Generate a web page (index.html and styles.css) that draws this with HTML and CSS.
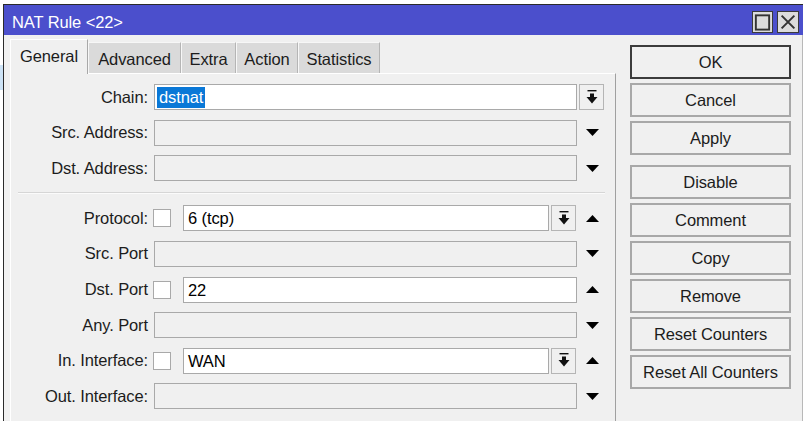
FILE: index.html
```html
<!DOCTYPE html>
<html>
<head>
<meta charset="utf-8">
<link rel="stylesheet" href="styles.css">
</head>
<body>
<div class="desktop">
  <div class="strip"><div class="strip-sel"></div></div>
  <div class="window">
    <div class="titlebar">
      <span class="title">NAT Rule &lt;22&gt;</span>
      <div class="tb-btns">
        <span class="tb-btn tb-max"><svg width="20" height="20" viewBox="0 0 20 20"><rect x="3" y="3" width="14" height="15" fill="none" stroke="#333" stroke-width="2"/></svg></span>
        <span class="tb-btn tb-close"><svg width="22" height="20" viewBox="0 0 22 20"><path d="M4 3 L18 17 M18 3 L4 17" stroke="#333" stroke-width="2.2" fill="none"/></svg></span>
      </div>
    </div>
    <div class="wbody">
      <div class="main">
        <div class="tabs">
          <div class="tab active t-general">General</div>
          <div class="tab t-advanced">Advanced</div>
          <div class="tab t-extra">Extra</div>
          <div class="tab t-action">Action</div>
          <div class="tab t-stats">Statistics</div>
        </div>
        <div class="panel">
          <div class="row">
            <label class="lbl">Chain:</label>
            <div class="field"><div class="input"><span class="sel">dstnat</span></div></div>
            <div class="side"><span class="dd-btn"><svg width="12" height="15" viewBox="0 0 12 15"><rect x="1.5" y="0" width="9" height="1.4" fill="#111"/><rect x="4" y="3.5" width="4" height="4" fill="#111"/><polygon points="0.5,7 11.5,7 6,13.5" fill="#111"/></svg></span></div>
          </div>
          <div class="row">
            <label class="lbl">Src. Address:</label>
            <div class="field"><div class="input off"></div></div>
            <div class="side"><svg class="tri" width="13" height="7" viewBox="0 0 13 7"><polygon points="0,0 13,0 6.5,7" fill="#000"/></svg></div>
          </div>
          <div class="row">
            <label class="lbl">Dst. Address:</label>
            <div class="field"><div class="input off"></div></div>
            <div class="side"><svg class="tri" width="13" height="7" viewBox="0 0 13 7"><polygon points="0,0 13,0 6.5,7" fill="#000"/></svg></div>
          </div>
          <div class="sep"></div>
          <div class="row">
            <label class="lbl">Protocol:</label>
            <div class="field"><span class="chk"></span><div class="input grow">6 (tcp)</div><span class="dd-btn"><svg width="12" height="15" viewBox="0 0 12 15"><rect x="1.5" y="0" width="9" height="1.4" fill="#111"/><rect x="4" y="3.5" width="4" height="4" fill="#111"/><polygon points="0.5,7 11.5,7 6,13.5" fill="#111"/></svg></span></div>
            <div class="side"><svg class="tri" width="13" height="7" viewBox="0 0 13 7"><polygon points="0,7 13,7 6.5,0" fill="#000"/></svg></div>
          </div>
          <div class="row">
            <label class="lbl">Src. Port</label>
            <div class="field"><div class="input off"></div></div>
            <div class="side"><svg class="tri" width="13" height="7" viewBox="0 0 13 7"><polygon points="0,0 13,0 6.5,7" fill="#000"/></svg></div>
          </div>
          <div class="row">
            <label class="lbl">Dst. Port</label>
            <div class="field"><span class="chk"></span><div class="input grow">22</div></div>
            <div class="side"><svg class="tri" width="13" height="7" viewBox="0 0 13 7"><polygon points="0,7 13,7 6.5,0" fill="#000"/></svg></div>
          </div>
          <div class="row">
            <label class="lbl">Any. Port</label>
            <div class="field"><div class="input off"></div></div>
            <div class="side"><svg class="tri" width="13" height="7" viewBox="0 0 13 7"><polygon points="0,0 13,0 6.5,7" fill="#000"/></svg></div>
          </div>
          <div class="row">
            <label class="lbl">In. Interface:</label>
            <div class="field"><span class="chk"></span><div class="input grow">WAN</div><span class="dd-btn"><svg width="12" height="15" viewBox="0 0 12 15"><rect x="1.5" y="0" width="9" height="1.4" fill="#111"/><rect x="4" y="3.5" width="4" height="4" fill="#111"/><polygon points="0.5,7 11.5,7 6,13.5" fill="#111"/></svg></span></div>
            <div class="side"><svg class="tri" width="13" height="7" viewBox="0 0 13 7"><polygon points="0,7 13,7 6.5,0" fill="#000"/></svg></div>
          </div>
          <div class="row">
            <label class="lbl">Out. Interface:</label>
            <div class="field"><div class="input off"></div></div>
            <div class="side"><svg class="tri" width="13" height="7" viewBox="0 0 13 7"><polygon points="0,0 13,0 6.5,7" fill="#000"/></svg></div>
          </div>
        </div>
      </div>
      <div class="buttons">
        <div class="btn default">OK</div>
        <div class="btn">Cancel</div>
        <div class="btn">Apply</div>
        <div class="btn gap-top">Disable</div>
        <div class="btn">Comment</div>
        <div class="btn">Copy</div>
        <div class="btn">Remove</div>
        <div class="btn">Reset Counters</div>
        <div class="btn">Reset All Counters</div>
      </div>
    </div>
  </div>
</div>
</body>
</html>
```

FILE: styles.css
```css
* { box-sizing: border-box; }
html, body {
  margin: 0;
  padding: 0;
  width: 803px;
  height: 421px;
  overflow: hidden;
  background: #ffffff;
}
body {
  font-family: "Liberation Sans", Arial, sans-serif;
  font-size: 16.5px;
  letter-spacing: -0.1px;
  color: #1c1c1c;
}
.desktop {
  display: flex;
  padding-top: 4px;
  height: 421px;
}
.strip {
  width: 3px;
  flex: none;
  padding-top: 61px;
}
.strip-sel {
  height: 25px;
  background: #cde3f6;
}
.window {
  flex: none;
  width: 801px;
  border-left: 1px solid #2a2a2a;
  border-top: 1px solid #2a2a2a;
  background: #f0f0f0;
}
.titlebar {
  display: flex;
  height: 30px;
  background: #4b4fcc;
  padding-left: 8px;
  padding-right: 5px;
}
.title {
  color: #ffffff;
  padding-top: 5px;
  line-height: 25px;
}
.tb-btns {
  margin-left: auto;
  display: flex;
  gap: 4px;
  padding-top: 6px;
}
.tb-btn {
  display: flex;
  align-items: center;
  justify-content: center;
  height: 22px;
  background: #dcdcdc;
  border: 1px solid #3a3a3a;
}
.tb-max { width: 21px; }
.tb-close { width: 22px; }
.wbody {
  display: flex;
  width: 799px;
  height: 386px;
  padding-top: 4px;
  padding-left: 6px;
  border-right: 1px solid #b8b8b8;
}
.main {
  width: 606px;
  flex: none;
  display: flex;
  flex-direction: column;
}
.tabs {
  display: flex;
  align-items: flex-end;
  height: 34px;
}
.tab {
  height: 31px;
  padding-top: 3px;
  line-height: 27px;
  text-align: center;
  background: #dadada;
  border-top: 1px solid #f7f7f7;
  border-left: 1px solid #f7f7f7;
  border-right: 1px solid #b5b5b5;
}
.tab.active {
  height: 35px;
  padding-top: 2px;
  line-height: 29px;
  background: #f0f0f0;
  border-top: 1px solid #ffffff;
  border-left: 1px solid #ffffff;
  border-right: 1px solid #a8a8a8;
  margin-bottom: -1px;
  position: relative;
  z-index: 1;
}
.t-general { width: 78px; }
.t-advanced { width: 93px; }
.t-extra { width: 55px; }
.t-action { width: 62px; }
.t-stats { width: 82px; }
.panel {
  flex: 1;
  border-top: 1px solid #ffffff;
  border-left: 1px solid #ffffff;
  border-right: 1px solid #a0a0a0;
  padding-top: 10px;
  display: flex;
  flex-direction: column;
  gap: 9.6px;
}
.row {
  display: flex;
  height: 26px;
  align-items: center;
}
.lbl {
  width: 143px;
  flex: none;
  text-align: right;
  padding-right: 6px;
  white-space: nowrap;
  color: #1c1c1c;
}
.field {
  width: 423px;
  height: 26px;
  flex: none;
  display: flex;
  align-items: center;
}
.input {
  height: 26px;
  width: 100%;
  background: #ffffff;
  border: 1px solid #a9a9a9;
  padding-left: 4px;
  line-height: 24px;
  color: #000;
  white-space: nowrap;
}
.input.off {
  background: #f0f0f0;
}
.input.grow {
  flex: 1;
  width: auto;
  margin-left: 12px;
}
.sel {
  display: inline-block;
  margin-left: -2px;
  padding: 0 2px;
  line-height: 21px;
  background: #0a78d7;
  color: #ffffff;
}
.chk {
  width: 18px;
  height: 18px;
  flex: none;
  margin-left: -1px;
  background: #ffffff;
  border: 1px solid #a9a9a9;
}
.dd-btn {
  width: 25px;
  height: 26px;
  flex: none;
  margin-left: 2px;
  margin-right: 1px;
  display: flex;
  align-items: center;
  justify-content: center;
  background: #f0f0f0;
  border: 1px solid #b5b5b5;
}
.side {
  width: 29px;
  flex: none;
  height: 26px;
  padding-left: 2px;
  display: flex;
  align-items: center;
}
.side .dd-btn {
  margin-left: 0;
}
.tri {
  margin-left: 7px;
}
.sep {
  margin: 1.5px 10px 1.5px 7px;
  border-top: 1px solid #d6d6d6;
  border-bottom: 1px solid #fbfbfb;
}
.buttons {
  width: 161px;
  flex: none;
  margin-left: 14px;
  padding-top: 6px;
  display: flex;
  flex-direction: column;
  gap: 4px;
}
.btn {
  height: 34px;
  line-height: 30px;
  text-align: center;
  border: 2px solid #a8a8a8;
  background: #f0f0f0;
  color: #1c1c1c;
  white-space: nowrap;
}
.btn.default {
  border-color: #3c3c3c;
}
.btn.gap-top {
  margin-top: 6px;
}
```
